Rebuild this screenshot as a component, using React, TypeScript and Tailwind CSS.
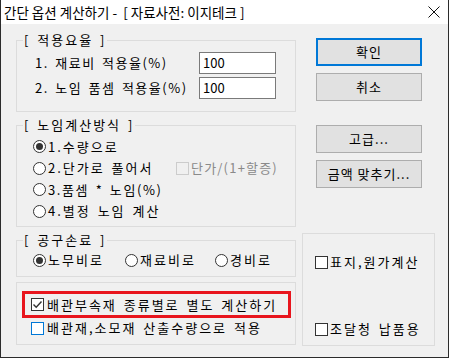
import React from 'react';

const font = "font-['Noto_Sans_CJK_KR','Noto_Sans',sans-serif]";

const Group = ({
  title,
  className,
  children,
}: {
  title?: string;
  className: string;
  children?: React.ReactNode;
}) => (
  <div className={`relative border border-[#dcdcdc] ${className}`}>
    {title && (
      <span className="absolute left-[6px] top-[-9px] bg-[#f0f0f0] px-[1px] text-[13px] leading-[16px] text-black">
        {title}
      </span>
    )}
    {children}
  </div>
);

const Radio = ({ checked }: { checked?: boolean }) => (
  <span className="flex h-[13px] w-[13px] shrink-0 items-center justify-center rounded-full border border-[#333] bg-white">
    {checked && <span className="h-[7px] w-[7px] rounded-full bg-[#333]" />}
  </span>
);

const Check = ({
  checked,
  tone = 'normal',
}: {
  checked?: boolean;
  tone?: 'normal' | 'disabled' | 'focus';
}) => (
  <span
    className={
      tone === 'disabled'
        ? 'flex h-[13px] w-[13px] shrink-0 items-center justify-center border border-[#cccccc] bg-[#f0f0f0]'
        : tone === 'focus'
        ? 'flex h-[13px] w-[13px] shrink-0 items-center justify-center border border-[#0078d7] bg-white'
        : 'flex h-[13px] w-[13px] shrink-0 items-center justify-center border border-[#333] bg-white'
    }
  >
    {checked && (
      <svg width="11" height="11" viewBox="0 0 11 11">
        <path d="M1.5 5.5 L4.2 8.2 L9.5 2.5" fill="none" stroke="#333" strokeWidth="1.4" />
      </svg>
    )}
  </span>
);

const Button = ({ label, primary }: { label: string; primary?: boolean }) => (
  <button
    className={
      primary
        ? 'h-[28px] w-[106px] border-2 border-[#0078d7] bg-[#e1e1e1] text-[13px] tracking-[1px] text-black [word-spacing:0px]'
        : 'h-[28px] w-[106px] border border-[#adadad] bg-[#e1e1e1] text-[13px] tracking-[1px] text-black [word-spacing:0px]'
    }
  >
    {label}
  </button>
);

export default function App() {
  return (
    <div className={`h-[359px] w-[449px] bg-white ${font}`}>
      <div className="flex h-[358px] w-[449px] flex-col border-x border-b border-[#2b2b2b]">
        {/* title bar */}
        <div className="flex h-[24px] shrink-0 items-center justify-between bg-white pl-[3px] pr-[7px]">
          <span className="text-[13.5px] text-black">
            간단 옵션 계산하기 -&nbsp; [ 자료사전: 이지테크 ]
          </span>
          <svg width="12" height="12" viewBox="0 0 12 12" className="mr-[1px]">
            <path d="M0.5 0.5 L11.5 11.5 M11.5 0.5 L0.5 11.5" stroke="#111" strokeWidth="1" />
          </svg>
        </div>

        <div className="flex flex-1 bg-[#f0f0f0] pl-[15px] text-[13px] leading-[16px] tracking-[2px] text-black [word-spacing:2px]">
          {/* left column */}
          <div className="flex w-[280px] flex-col pt-[16px]">
            <Group title="[ 적용요율 ]" className="h-[72px]">
              <div className="flex flex-col gap-[3px] pl-[18px] pt-[11px]">
                <div className="flex items-center">
                  <span className="w-[164px] tracking-[1.5px]">1. 재료비 적용율(%)</span>
                  <div className="flex h-[22px] w-[77px] items-center border border-[#7a7a7a] bg-white pl-[3px] tracking-normal">
                    100
                  </div>
                </div>
                <div className="flex items-center">
                  <span className="w-[164px] tracking-[1.5px]">2. 노임 품셈 적용율(%)</span>
                  <div className="flex h-[22px] w-[77px] items-center border border-[#7a7a7a] bg-white pl-[3px] tracking-normal">
                    100
                  </div>
                </div>
              </div>
            </Group>

            <Group title="[ 노임계산방식 ]" className="mt-[13px] h-[102px]">
              <div className="flex flex-col pl-[16px] pt-[10px]">
                <div className="flex h-[21.5px] items-center gap-[2px]">
                  <Radio checked />
                  <span>1.수량으로</span>
                </div>
                <div className="flex h-[21.5px] items-center gap-[2px]">
                  <Radio />
                  <span className="w-[126px]">2.단가로 풀어서</span>
                  <Check tone="disabled" />
                  <span className="tracking-[1.2px] text-[#8a8a8a]">단가/(1+할증)</span>
                </div>
                <div className="flex h-[21.5px] items-center gap-[2px]">
                  <Radio />
                  <span className="tracking-[1.6px]">3.품셈 * 노임(%)</span>
                </div>
                <div className="flex h-[21.5px] items-center gap-[2px]">
                  <Radio />
                  <span>4.별정 노임 계산</span>
                </div>
              </div>
            </Group>

            <Group title="[ 공구손료 ]" className="mt-[13px] h-[37px]">
              <div className="flex h-full items-center pl-[16px] pt-[3px]">
                <div className="flex w-[92px] items-center gap-[2px]">
                  <Radio checked />
                  <span>노무비로</span>
                </div>
                <div className="flex w-[90px] items-center gap-[2px]">
                  <Radio />
                  <span>재료비로</span>
                </div>
                <div className="flex items-center gap-[2px]">
                  <Radio />
                  <span>경비로</span>
                </div>
              </div>
            </Group>

            <Group className="mt-[5px] h-[63px]">
              <div className="flex flex-col pl-[5px] pt-[8px]">
                <div className="flex h-[27px] w-[269px] items-center gap-[3px] border-[3px] border-[#e8151d] pl-[6px]">
                  <Check checked />
                  <span>배관부속재 종류별로 별도 계산하기</span>
                </div>
                <div className="flex h-[20px] items-center gap-[3px] pl-[9px]">
                  <Check tone="focus" />
                  <span>배관재,소모재 산출수량으로 적용</span>
                </div>
              </div>
            </Group>
          </div>

          {/* right column */}
          <div className="ml-[6px] flex flex-col">
            <div className="flex flex-col gap-[7px] pl-[14px] pt-[14px]">
              <Button label="확인" primary />
              <Button label="취소" />
            </div>
            <div className="mt-[24px] flex flex-col gap-[7px] pl-[14px]">
              <Button label="고급..." />
              <Button label="금액 맞추기..." />
            </div>
            <Group className="mt-[45px] h-[113px] w-[133px]">
              <div className="flex h-full flex-col justify-between pb-[8px] pl-[12px] pt-[20px]">
                <div className="flex items-center gap-[2px]">
                  <Check />
                  <span>표지,원가계산</span>
                </div>
                <div className="flex items-center gap-[2px]">
                  <Check />
                  <span>조달청 납품용</span>
                </div>
              </div>
            </Group>
          </div>
        </div>
      </div>
    </div>
  );
}
